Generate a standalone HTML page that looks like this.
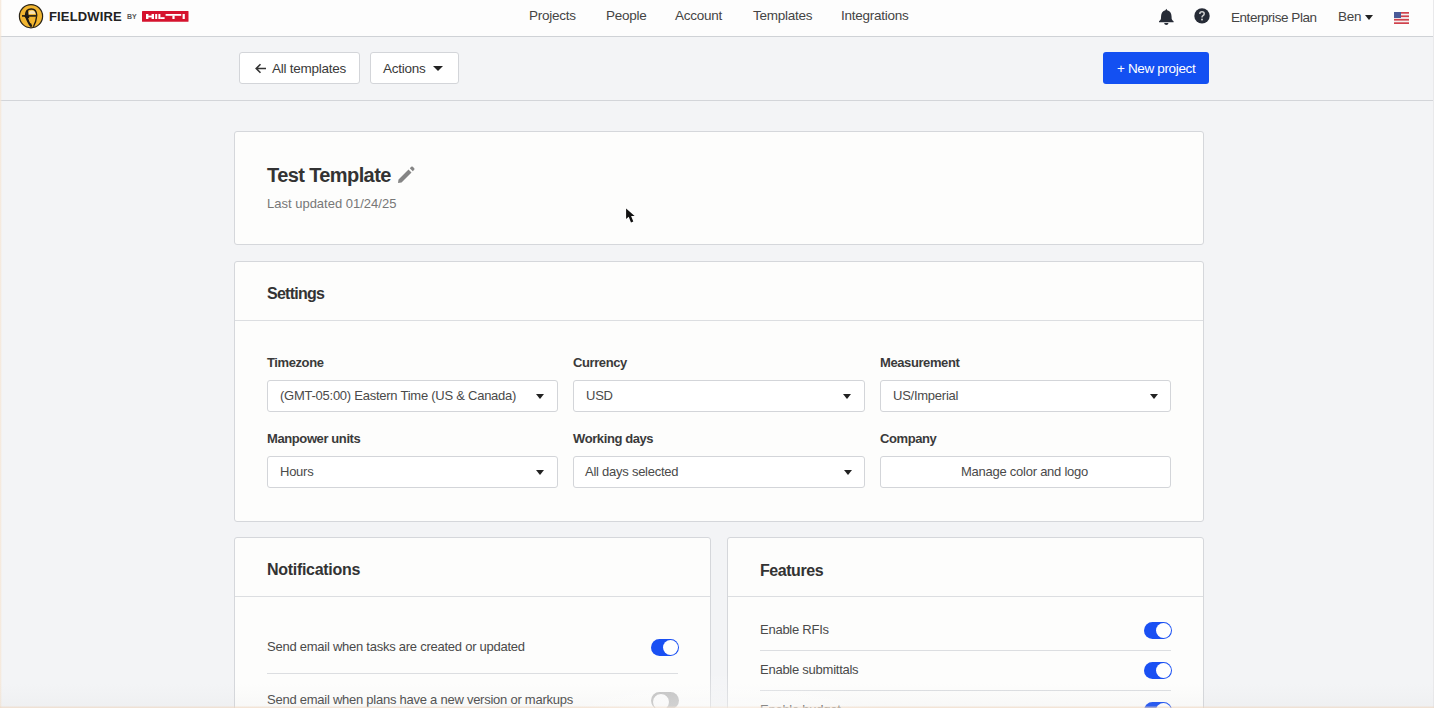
<!DOCTYPE html>
<html><head><meta charset="utf-8">
<style>
*{box-sizing:border-box;margin:0;padding:0}
html,body{width:1434px;height:708px;overflow:hidden}
body{font-family:"Liberation Sans",sans-serif;background:#f3f4f6;color:#333;position:relative}
.abs{position:absolute}
.t{position:absolute;white-space:nowrap;line-height:1}
#hdr{position:absolute;left:0;top:0;width:1434px;height:37px;background:#fdfdfd;border-bottom:1px solid #cfd2d6}
#bar{position:absolute;left:0;top:37px;width:1434px;height:64px;background:#f3f4f6;border-bottom:1px solid #d3d5d9}
.btn{position:absolute;background:#fff;border:1px solid #d3d5d9;border-radius:3px}
.card{position:absolute;background:#fdfdfc;border:1px solid #d5d7db;border-radius:3px}
.div{position:absolute;height:1px;background:#dcdee1}
.sel{position:absolute;background:#fff;border:1px solid #d3d5d9;border-radius:3px;height:32px}
.caret{position:absolute;width:0;height:0;border-left:4px solid transparent;border-right:4px solid transparent;border-top:5px solid #222}
.lbl{font-size:13px;font-weight:700;color:#3a3a3a;letter-spacing:-0.4px}
.val{font-size:13px;color:#4a4a4a;letter-spacing:-0.25px}
.nav{font-size:13.5px;color:#444;letter-spacing:-0.25px}
.h2{font-size:16px;font-weight:700;color:#333;letter-spacing:-0.45px}
.tog{position:absolute;width:28px;height:17px;border-radius:9px;background:#1a50f3}
.tog::after{content:"";position:absolute;right:1px;top:1px;width:15px;height:15px;border-radius:50%;background:#fff}
.tog.off{background:#bdbdbd}
.tog.off::after{left:0.5px;right:auto;top:0.5px;width:16px;height:16px;border:1px solid #b8b8b8;background:#fbfbfb}
</style></head>
<body>
<div id="hdr"></div>
<div id="bar"></div>

<!-- logo -->
<svg class="abs" style="left:18px;top:3px" width="26" height="26" viewBox="0 0 26 26">
  <circle cx="13" cy="13.2" r="11.6" fill="#f2b630" stroke="#2a2418" stroke-width="1.2"/>
  <path d="M10.3 10.9 Q10.8 7.4 14 7.4 Q17.3 7.4 17.7 10.9 Z" fill="#f8e2b0"/>
  <path d="M7.4 12.6 Q7.7 6 13.3 6 Q18.6 6 18.8 12.6" fill="none" stroke="#1e1a14" stroke-width="1.4"/>
  <path d="M4 12.9 L19.2 12.9" stroke="#1e1a14" stroke-width="1.6"/>
  <path d="M6.2 13 L11 13 Q11.2 15.8 12.2 18 L14.4 23.6 L12.6 24 Q10.4 21.6 9.4 19.2 Q8.4 17 7.6 15.2 Z" fill="#1e1a14"/><path d="M7.6 12.6 Q8 8.4 10 7 L10.6 12.6 Z" fill="#1e1a14"/><path d="M10.2 15 Q10.8 17.6 12.4 20.6 L13.4 19.6 Q12 17 11.6 15 Z" fill="#f2b630"/>
  <path d="M18.6 13.4 Q18.3 18.5 15.4 23.8" fill="none" stroke="#1e1a14" stroke-width="1.3"/>
</svg>
<div class="t" style="left:49px;top:10px;font-size:13px;font-weight:700;color:#222;letter-spacing:0.15px">FIELDWIRE</div>
<div class="t" style="left:127px;top:13px;font-size:7px;font-weight:700;color:#555">BY</div>
<svg class="abs" style="left:142px;top:11px" width="47" height="11" viewBox="0 0 47 11">
  <rect x="0" y="0" width="46.5" height="10.8" rx="0.6" fill="#d5132e"/>
  <g fill="#fff">
    <rect x="4" y="3" width="2.4" height="5"/><rect x="6" y="4.6" width="4" height="1.8"/><rect x="9.6" y="3" width="2.4" height="5"/>
    <rect x="13.2" y="3" width="2" height="5"/>
    <rect x="16.4" y="3" width="2" height="5"/><rect x="18.2" y="6.2" width="4.4" height="1.8"/>
    <rect x="23.6" y="3" width="15.6" height="1.8"/><rect x="30.4" y="4.6" width="2.2" height="3.4"/>
    <rect x="40.6" y="3" width="2.2" height="5"/>
  </g>
</svg>

<!-- nav -->
<div class="t nav" style="left:529px;top:9px">Projects</div>
<div class="t nav" style="left:606px;top:9px">People</div>
<div class="t nav" style="left:675px;top:9px">Account</div>
<div class="t nav" style="left:753px;top:9px">Templates</div>
<div class="t nav" style="left:841px;top:9px">Integrations</div>

<!-- right header -->
<svg class="abs" style="left:1158px;top:8px" width="17" height="18" viewBox="0 0 17 18">
  <path d="M8.3 0.8 L9.2 2.2 Q13.3 3.2 13.5 8 L13.7 11 Q14.2 12.4 15.6 13.2 L15.6 14.2 L1 14.2 L1 13.2 Q2.4 12.4 2.9 11 L3.1 8 Q3.3 3.2 7.4 2.2 Z" fill="#262b36"/>
  <path d="M6.1 15 L10.5 15 Q10.2 17 8.3 17 Q6.4 17 6.1 15 Z" fill="#262b36"/>
</svg>
<svg class="abs" style="left:1194px;top:8px" width="16" height="16" viewBox="0 0 16 16">
  <circle cx="8" cy="7.9" r="7.7" fill="#262b36"/>
  <path d="M5.8 5.9 Q5.8 3.7 8 3.7 Q10.2 3.7 10.2 5.7 Q10.2 6.9 9 7.6 Q8 8.3 8 9.5" fill="none" stroke="#d0d0d0" stroke-width="1.5"/>
  <rect x="7.1" y="10.7" width="1.8" height="1.7" fill="#d0d0d0"/>
</svg>
<div class="t nav" style="left:1231px;top:10.5px;letter-spacing:-0.45px">Enterprise Plan</div>
<div class="t nav" style="left:1338px;top:9.5px">Ben</div>
<div class="caret" style="left:1365px;top:15px"></div>
<svg class="abs" style="left:1394px;top:11.5px" width="15" height="12" viewBox="0 0 15 12">
  <rect width="15" height="12" fill="#f4f0f0"/>
  <rect y="0" width="15" height="1.7" fill="#d0414c"/><rect y="3.4" width="15" height="1.7" fill="#d0414c"/>
  <rect y="6.9" width="15" height="1.7" fill="#d0414c"/><rect y="10.3" width="15" height="1.7" fill="#d0414c"/>
  <rect width="7" height="6" fill="#4a5a98"/>
</svg>

<!-- toolbar buttons -->
<div class="btn" style="left:239px;top:52px;width:121px;height:32px"></div>
<svg class="abs" style="left:255px;top:63px" width="12" height="11" viewBox="0 0 12 11">
  <path d="M11 5.5 L1.5 5.5 M5.5 1.2 L1.2 5.5 L5.5 9.8" fill="none" stroke="#333" stroke-width="1.6"/>
</svg>
<div class="t nav" style="left:272px;top:61.5px;color:#3a3a3a">All templates</div>
<div class="btn" style="left:370px;top:52px;width:89px;height:32px"></div>
<div class="t nav" style="left:383px;top:61.5px;color:#3a3a3a">Actions</div>
<div class="caret" style="left:433px;top:66px;border-left-width:5px;border-right-width:5px;border-top-width:5px"></div>
<div class="abs" style="left:1103px;top:52px;width:106px;height:32px;background:#1350f2;border-radius:3px"></div>
<div class="t nav" style="left:1117px;top:61.5px;color:#fff;letter-spacing:-0.35px">+ New project</div>

<!-- card 1 -->
<div class="card" style="left:234px;top:131px;width:970px;height:114px"></div>
<div class="t" style="left:267px;top:164.8px;font-size:20px;font-weight:700;color:#333;letter-spacing:-0.6px">Test Template</div>
<svg class="abs" style="left:397px;top:166px" width="18" height="18" viewBox="0 0 18 18">
  <path d="M1 17 L1.5 13.5 L11.5 3.5 L14.5 6.5 L4.5 16.5 Z M12.8 2.2 L14.2 0.8 Q15 0 15.8 0.8 L17.2 2.2 Q18 3 17.2 3.8 L15.8 5.2 Z" fill="#858585"/>
</svg>
<div class="t" style="left:267px;top:197px;font-size:13px;color:#777">Last updated 01/24/25</div>

<!-- settings card -->
<div class="card" style="left:234px;top:261px;width:970px;height:261px"></div>
<div class="t h2" style="left:267px;top:286px;letter-spacing:-0.75px">Settings</div>
<div class="div" style="left:235px;top:320px;width:968px"></div>

<div class="t lbl" style="left:267px;top:356px">Timezone</div>
<div class="t lbl" style="left:573px;top:356px">Currency</div>
<div class="t lbl" style="left:880px;top:356px">Measurement</div>
<div class="sel" style="left:267px;top:380px;width:291px"></div>
<div class="sel" style="left:573px;top:380px;width:292px"></div>
<div class="sel" style="left:880px;top:380px;width:291px"></div>
<div class="t val" style="left:280px;top:389px">(GMT-05:00) Eastern Time (US &amp; Canada)</div>
<div class="t val" style="left:586px;top:389px">USD</div>
<div class="t val" style="left:893px;top:389px">US/Imperial</div>
<div class="caret" style="left:536px;top:394px"></div>
<div class="caret" style="left:843px;top:394px"></div>
<div class="caret" style="left:1150px;top:394px"></div>

<div class="t lbl" style="left:267px;top:432px">Manpower units</div>
<div class="t lbl" style="left:573px;top:432px">Working days</div>
<div class="t lbl" style="left:880px;top:432px">Company</div>
<div class="sel" style="left:267px;top:456px;width:291px"></div>
<div class="sel" style="left:573px;top:456px;width:292px"></div>
<div class="sel" style="left:880px;top:456px;width:291px"></div>
<div class="t val" style="left:280px;top:465px">Hours</div>
<div class="t val" style="left:585px;top:465px">All days selected</div>
<div class="t val" style="left:961px;top:465px">Manage color and logo</div>
<div class="caret" style="left:536px;top:470px"></div>
<div class="caret" style="left:844px;top:470px"></div>

<!-- notifications -->
<div class="card" style="left:234px;top:537px;width:477px;height:200px"></div>
<div class="t h2" style="left:267px;top:562px;letter-spacing:-0.3px">Notifications</div>
<div class="div" style="left:235px;top:596px;width:475px"></div>
<div class="t val" style="left:267px;top:640px">Send email when tasks are created or updated</div>
<div class="tog" style="left:651px;top:639px"></div>
<div class="div" style="left:267px;top:673px;width:411px"></div>
<div class="t val" style="left:267px;top:693px">Send email when plans have a new version or markups</div>
<div class="tog off" style="left:651px;top:692px"></div>

<!-- features -->
<div class="card" style="left:727px;top:537px;width:477px;height:200px"></div>
<div class="t h2" style="left:760px;top:563px">Features</div>
<div class="div" style="left:728px;top:596px;width:475px"></div>
<div class="t val" style="left:760px;top:623px">Enable RFIs</div>
<div class="tog" style="left:1144px;top:622px"></div>
<div class="div" style="left:760px;top:650px;width:411px"></div>
<div class="t val" style="left:760px;top:663px">Enable submittals</div>
<div class="tog" style="left:1144px;top:662px"></div>
<div class="div" style="left:760px;top:690px;width:411px"></div>
<div class="t val" style="left:760px;top:703px">Enable budget</div>
<div class="tog" style="left:1144px;top:702px"></div>

<!-- cursor -->
<svg class="abs" style="left:624px;top:206px" width="14" height="20" viewBox="0 0 14 20">
  <path d="M2.1 2.4 L2.1 13 L4.7 10.8 L7 16.4 L9.3 15.4 L7.1 10.1 L10.6 10 Z" fill="#111" stroke="#fff" stroke-width="1" stroke-linejoin="round" style="paint-order:stroke"/>
</svg>
<!-- edges / fade -->
<div class="abs" style="left:0;top:0;width:1.5px;height:708px;background:linear-gradient(90deg,#f5e6d6,rgba(245,230,214,0))"></div>
<div class="abs" style="left:1433px;top:0;width:1px;height:708px;background:#e9e9eb"></div>
<div class="abs" style="left:0;top:684px;width:1434px;height:24px;background:linear-gradient(180deg,rgba(210,210,210,0),rgba(205,205,205,0.1) 92%,rgba(236,214,194,0.55) 95%,rgba(238,214,192,0.7))"></div>
<div class="abs" style="left:540px;top:668px;width:360px;height:60px;background:radial-gradient(ellipse at 50% 80%,rgba(255,255,255,0.45),rgba(255,255,255,0) 65%)"></div>
</body></html>
